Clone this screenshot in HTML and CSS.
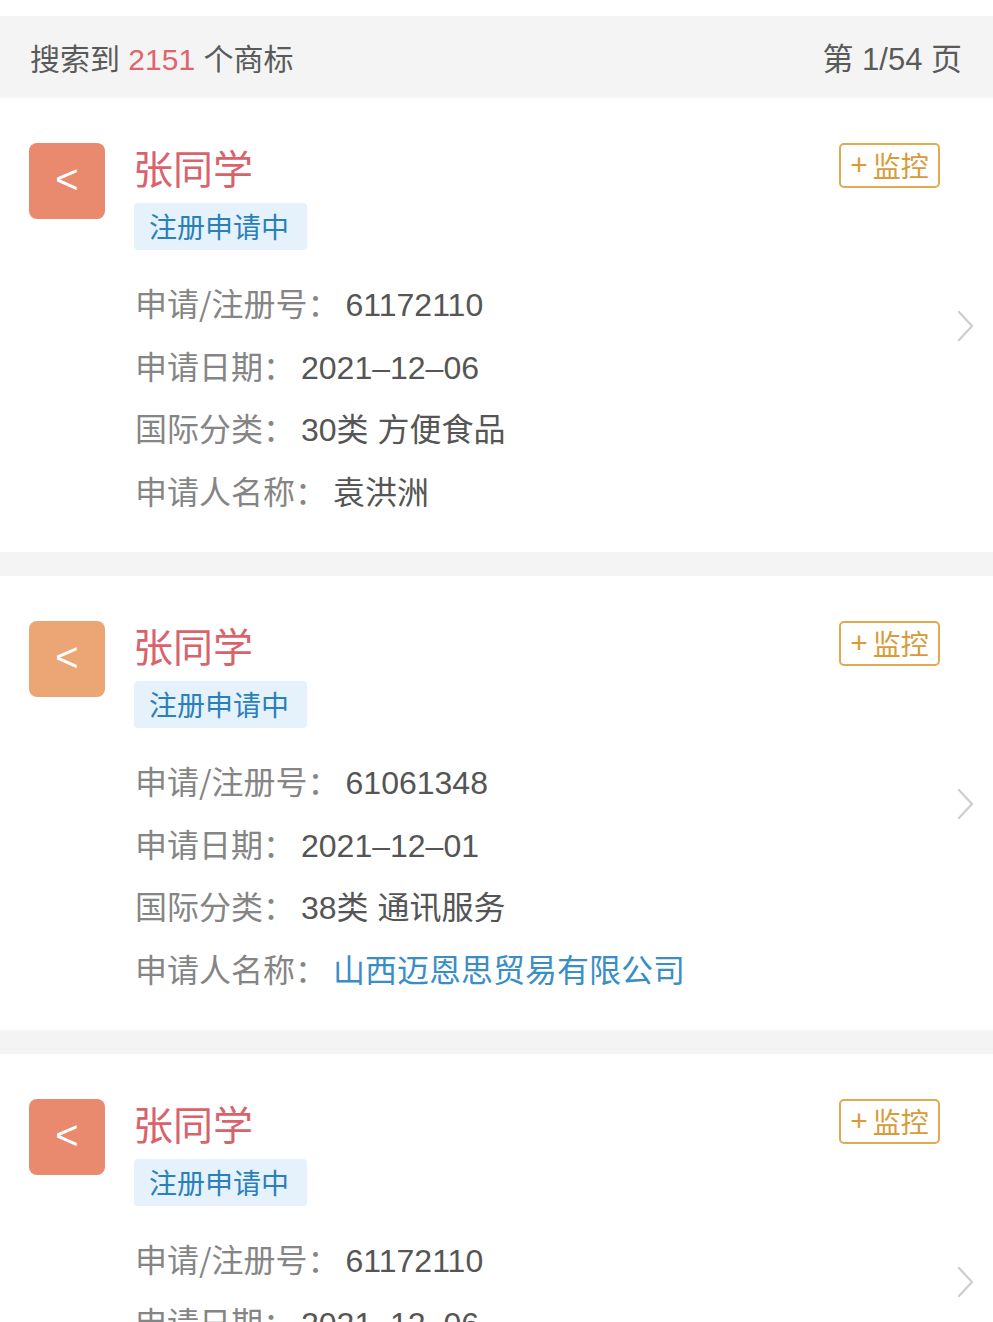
FILE: index.html
```html
<!DOCTYPE html>
<html lang="zh-CN">
<head>
<meta charset="utf-8">
<title>商标搜索</title>
<link rel="stylesheet" href="styles.css">
</head>
<body>
<div class="topstrip"></div>
<div class="summary">
  <div class="summary-left">搜索到 <span class="count">2151</span> 个商标</div>
  <div class="summary-right">第 1/54 页</div>
</div>

<div class="list">
  <div class="card">
    <div class="logo logo-a"><span>&lt;</span></div>
    <div class="content">
      <div class="title">张同学</div>
      <div class="badge">注册申请中</div>
      <div class="rows">
        <div class="row"><span class="label">申请/注册号：</span><span class="value">61172110</span></div>
        <div class="row"><span class="label">申请日期：</span><span class="value">2021–12–06</span></div>
        <div class="row"><span class="label">国际分类：</span><span class="value">30类 方便食品</span></div>
        <div class="row"><span class="label">申请人名称：</span><span class="value">袁洪洲</span></div>
      </div>
    </div>
    <div class="side">
      <div class="watch"><span class="plus">+</span>监控</div>
      <svg class="chev" width="18" height="32" viewBox="0 0 18 32"><path d="M2 2 L15 16 L2 30" fill="none" stroke="#cfcfcf" stroke-width="2.4" stroke-linecap="round" stroke-linejoin="round"/></svg>
    </div>
  </div>

  <div class="card">
    <div class="logo logo-b"><span>&lt;</span></div>
    <div class="content">
      <div class="title">张同学</div>
      <div class="badge">注册申请中</div>
      <div class="rows">
        <div class="row"><span class="label">申请/注册号：</span><span class="value">61061348</span></div>
        <div class="row"><span class="label">申请日期：</span><span class="value">2021–12–01</span></div>
        <div class="row"><span class="label">国际分类：</span><span class="value">38类 通讯服务</span></div>
        <div class="row"><span class="label">申请人名称：</span><span class="value link">山西迈恩思贸易有限公司</span></div>
      </div>
    </div>
    <div class="side">
      <div class="watch"><span class="plus">+</span>监控</div>
      <svg class="chev" width="18" height="32" viewBox="0 0 18 32"><path d="M2 2 L15 16 L2 30" fill="none" stroke="#cfcfcf" stroke-width="2.4" stroke-linecap="round" stroke-linejoin="round"/></svg>
    </div>
  </div>

  <div class="card">
    <div class="logo logo-a"><span>&lt;</span></div>
    <div class="content">
      <div class="title">张同学</div>
      <div class="badge">注册申请中</div>
      <div class="rows">
        <div class="row"><span class="label">申请/注册号：</span><span class="value">61172110</span></div>
        <div class="row"><span class="label">申请日期：</span><span class="value">2021–12–06</span></div>
        <div class="row"><span class="label">国际分类：</span><span class="value">30类 方便食品</span></div>
        <div class="row"><span class="label">申请人名称：</span><span class="value">袁洪洲</span></div>
      </div>
    </div>
    <div class="side">
      <div class="watch"><span class="plus">+</span>监控</div>
      <svg class="chev" width="18" height="32" viewBox="0 0 18 32"><path d="M2 2 L15 16 L2 30" fill="none" stroke="#cfcfcf" stroke-width="2.4" stroke-linecap="round" stroke-linejoin="round"/></svg>
    </div>
  </div>
</div>
</body>
</html>
```

FILE: styles.css
```css
html, body {
  margin: 0;
  padding: 0;
}
body {
  background: #f4f4f4;
  font-family: "Noto Sans CJK SC", "Noto Sans", sans-serif;
  overflow: hidden;
  height: 1322px;
}
.topstrip {
  height: 16px;
  background: #ffffff;
}
.summary {
  box-sizing: border-box;
  height: 82px;
  display: flex;
  align-items: center;
  justify-content: space-between;
  padding: 5px 31px 0 30px;
  font-size: 30px;
  line-height: 40px;
  color: #5a5a5a;
  background: #f4f4f4;
}
.summary-left, .summary-right {
  font-family: "Liberation Sans", "Noto Sans CJK SC", sans-serif;
}
.summary-right {
  font-size: 31px;
}
.count {
  color: #e0646c;
}
.list {
  display: flex;
  flex-direction: column;
  gap: 24px;
}
.card {
  background: #ffffff;
  display: flex;
  padding: 45px 0 30px 29px;
  min-height: 379px;
}
.logo {
  width: 76px;
  height: 76px;
  border-radius: 8px;
  display: flex;
  align-items: center;
  justify-content: center;
  color: #ffffff;
  font-size: 40px;
  line-height: 1;
  flex-shrink: 0;
  font-family: "Liberation Sans", sans-serif;
}
.logo span {
  margin-top: -4px;
}
.logo-a { background: #e98a6e; }
.logo-b { background: #eca676; }
.content {
  margin-left: 30px;
  flex: 1;
  display: flex;
  flex-direction: column;
  align-items: flex-start;
}
.title {
  font-size: 40px;
  line-height: 48px;
  color: #d8636b;
  margin-left: -2px;
}
.badge {
  margin-top: 12px;
  height: 47px;
  line-height: 47px;
  padding: 0 18px 0 15px;
  background: #e5f2fb;
  color: #2a80b8;
  font-size: 28px;
  border-radius: 4px;
  margin-left: -1px;
}
.rows {
  margin-top: 21px;
}
.row {
  font-size: 32px;
  line-height: 62.5px;
  height: 62.5px;
  white-space: nowrap;
}
.label {
  color: #858585;
  line-height: 1;
}
.value {
  color: #555555;
  margin-left: 6px;
  line-height: 1;
  font-family: "Liberation Sans", "Noto Sans CJK SC", sans-serif;
}
.value.link {
  color: #3a8ec6;
}
.side {
  width: 154px;
  display: flex;
  flex-direction: column;
  align-items: flex-start;
}
.watch {
  box-sizing: border-box;
  width: 101px;
  height: 45px;
  line-height: 41px;
  border: 2px solid #e2aa50;
  border-radius: 5px;
  color: #d99a38;
  font-size: 28px;
  text-align: center;
  display: flex;
  align-items: center;
  justify-content: center;
}
.plus {
  font-family: "Liberation Sans", sans-serif;
  font-size: 30px;
  margin-right: 5px;
  margin-top: -3px;
}
.chev {
  margin-top: 122px;
  margin-left: 118px;
}
```
